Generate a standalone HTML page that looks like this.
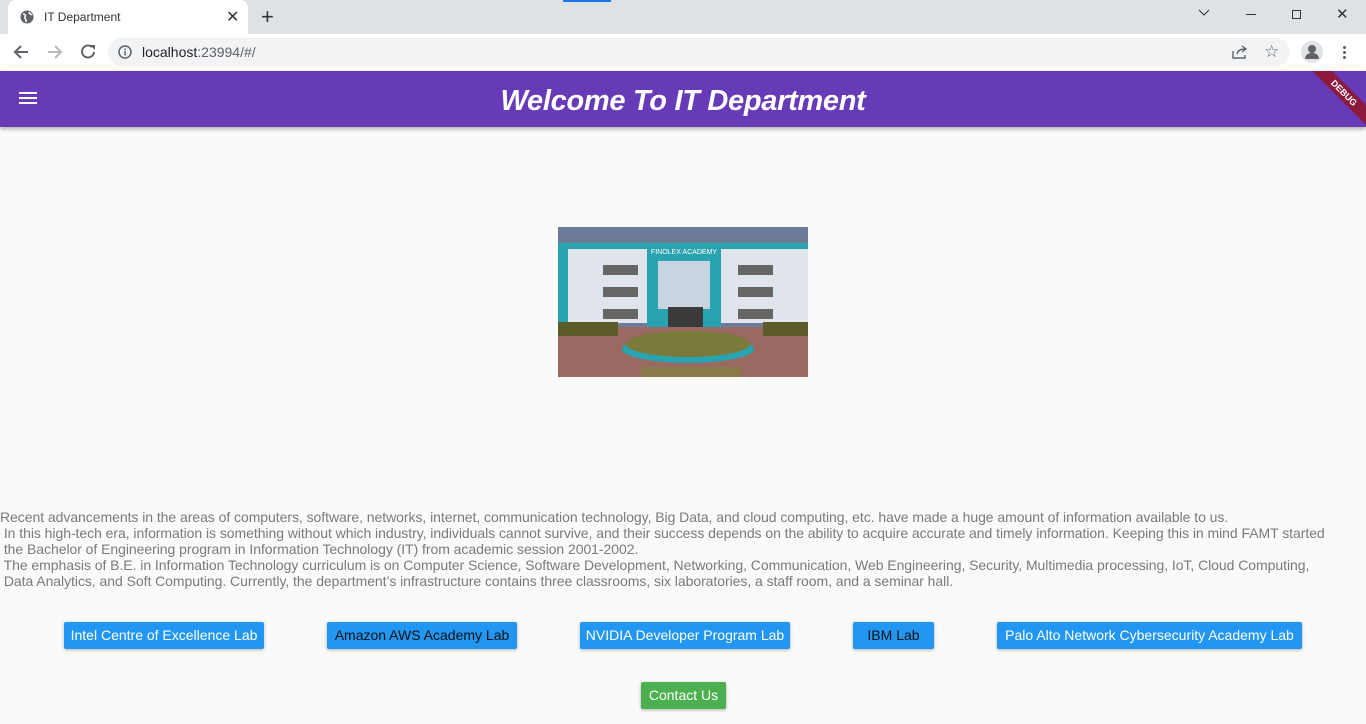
<!DOCTYPE html>
<html><head><meta charset="utf-8"><style>
*{margin:0;padding:0;box-sizing:border-box}
body{width:1366px;height:724px;overflow:hidden;background:#fafafa;font-family:"Liberation Sans",sans-serif;position:relative}
.abs{position:absolute}
.tabbar{left:0;top:0;width:1366px;height:34px;background:#dee1e6}
.tab{left:8px;top:0;width:240px;height:34px;background:#fff;border-radius:8px 8px 0 0;font-size:12px;color:#333}
.nav{left:0;top:34px;width:1366px;height:36px;background:#fff}
.url{left:108px;top:38px;width:1182px;height:28px;background:#f1f3f4;border-radius:14px;font-size:14px;color:#202124}
.appbar{left:0;top:71px;width:1366px;height:56px;background:#673ab7;box-shadow:0 2px 4px rgba(0,0,0,.3)}
.title{left:0;top:85px;width:1366px;text-align:center;color:#fff;font-size:29px;font-style:italic;font-weight:bold;letter-spacing:-0.3px}
.txt{left:0;top:509px;font-size:14px;line-height:16px;color:#7a7a7a;white-space:pre;letter-spacing:-0.05px}
.btn{height:27px;background:#2196f3;color:#fff;font-size:14px;line-height:27px;text-align:center;border-radius:2px;box-shadow:0 1px 3px rgba(0,0,0,.3)}
</style></head><body>
<div class="abs tabbar"></div>
<div class="abs" style="left:563px;top:0;width:48px;height:2px;background:#1a73e8"></div>
<div class="abs tab">
 <svg class="abs" style="left:12px;top:10px" width="14" height="14" viewBox="0 0 14 14"><circle cx="7" cy="7" r="6.5" fill="#5f6368"/><path d="M3 4c2 0 3 1 2 3s2 2 1 5M9 2c0 2 2 2 3 3" stroke="#fff" stroke-width="1.5" fill="none"/></svg>
 <span class="abs" style="left:36px;top:10px">IT Department</span>
 <span class="abs" style="left:218px;top:7px;font-size:16px;color:#333">✕</span>
</div>
<span class="abs" style="left:261px;top:4px;font-size:22px;color:#333">+</span>
<svg class="abs" style="left:1198px;top:9px" width="12" height="8"><path d="M1 1l5 5 5-5" stroke="#333" fill="none"/></svg>
<div class="abs" style="left:1246px;top:14px;width:10px;height:1px;background:#333"></div>
<div class="abs" style="left:1292px;top:10px;width:9px;height:9px;border:1px solid #333"></div>
<span class="abs" style="left:1336px;top:5px;font-size:15px;color:#333">✕</span>
<div class="abs nav"></div>
<svg class="abs" style="left:12px;top:43px" width="90" height="18" viewBox="0 0 90 18"><path d="M16 9H3M9 3L3 9l6 6" stroke="#5f6368" stroke-width="2" fill="none"/><path d="M36 9h13M43 3l6 6-6 6" stroke="#bbb" stroke-width="2" fill="none"/><path d="M80 4a6 6 0 1 0 2 5" stroke="#5f6368" stroke-width="2" fill="none"/><path d="M78 2h5v5z" fill="#5f6368"/></svg>
<div class="abs url"><svg class="abs" style="left:10px;top:7px" width="14" height="14"><circle cx="7" cy="7" r="6" stroke="#5f6368" stroke-width="1.5" fill="none"/><rect x="6.3" y="6" width="1.5" height="4.5" fill="#5f6368"/><rect x="6.3" y="3.5" width="1.5" height="1.5" fill="#5f6368"/></svg><span class="abs" style="left:34px;top:6px">localhost<span style="color:#5f6368">:23994/#/</span></span></div>
<svg class="abs" style="left:1231px;top:44px" width="18" height="16"><path d="M2 7v7h12v-3M6 10c1-4 4-5 8-5M11 2l4 3-4 3" stroke="#5f6368" stroke-width="1.4" fill="none"/></svg>
<span class="abs" style="left:1264px;top:42px;font-size:17px;color:#5f6368">☆</span>
<div class="abs" style="left:1301px;top:41px;width:22px;height:22px;border-radius:50%;background:#e1e3e6"><div class="abs" style="left:7px;top:4px;width:8px;height:8px;border-radius:50%;background:#5f6368"></div><div class="abs" style="left:4px;top:12px;width:14px;height:6px;border-radius:6px 6px 0 0;background:#5f6368"></div></div>
<div class="abs" style="left:1343px;top:45px;width:3px;height:14px;background:radial-gradient(circle,#5f6368 1.4px,transparent 1.6px) 0 0/3px 5px"></div>
<div class="abs appbar"></div>
<div class="abs" style="left:19px;top:92px;width:18px;height:2px;background:#fff;box-shadow:0 5px 0 #fff,0 10px 0 #fff"></div>
<div class="abs title">Welcome To IT Department</div>
<div class="abs" style="left:1302px;top:71px;width:64px;height:56px;overflow:hidden"><div class="abs" style="left:-8px;top:15px;width:100px;height:14px;background:#8b1a3c;transform:rotate(45deg);color:#fff;font-size:9px;font-weight:bold;text-align:center;line-height:14px">DEBUG</div></div>
<svg class="abs" style="left:558px;top:227px" width="250" height="150" viewBox="0 0 250 150">
<rect width="250" height="150" fill="#6b7b98"/>
<rect y="16" width="250" height="80" fill="#dfe5ea"/>
<rect y="16" width="250" height="6" fill="#2aa3b0"/>
<rect x="0" y="16" width="10" height="80" fill="#2aa3b0"/>
<rect x="89" y="16" width="74" height="95" fill="#2aa3b0"/>
<rect x="100" y="34" width="52" height="48" fill="#c8d4e0"/>
<rect x="110" y="80" width="35" height="28" fill="#3a3a3a"/>
<text x="126" y="27" fill="#fff" font-size="7" text-anchor="middle" font-family="Liberation Sans">FINOLEX ACADEMY</text>
<g fill="#666"><rect x="45" y="38" width="35" height="10"/><rect x="45" y="60" width="35" height="10"/><rect x="45" y="82" width="35" height="10"/><rect x="180" y="38" width="35" height="10"/><rect x="180" y="60" width="35" height="10"/><rect x="180" y="82" width="35" height="10"/></g>
<rect y="100" width="250" height="50" fill="#9a6a62"/>
<rect y="95" width="60" height="14" fill="#5a5a2a"/><rect x="205" y="95" width="45" height="14" fill="#5a5a2a"/>
<ellipse cx="130" cy="122" rx="66" ry="14" fill="#2aa3b0"/>
<ellipse cx="130" cy="117" rx="62" ry="13" fill="#7a7a3a"/>
<rect x="83" y="140" width="100" height="10" fill="#8a7a4a"/>
</svg>
<div class="abs txt">Recent advancements in the areas of computers, software, networks, internet, communication technology, Big Data, and cloud computing, etc. have made a huge amount of information available to us.
 In this high-tech era, information is something without which industry, individuals cannot survive, and their success depends on the ability to acquire accurate and timely information. Keeping this in mind FAMT started
 the Bachelor of Engineering program in Information Technology (IT) from academic session 2001-2002.
 The emphasis of B.E. in Information Technology curriculum is on Computer Science, Software Development, Networking, Communication, Web Engineering, Security, Multimedia processing, IoT, Cloud Computing,
 Data Analytics, and Soft Computing. Currently, the department’s infrastructure contains three classrooms, six laboratories, a staff room, and a seminar hall.</div>
<div class="abs btn" style="left:64px;top:622px;width:200px">Intel Centre of Excellence Lab</div>
<div class="abs btn" style="left:327px;top:622px;width:190px;color:#111">Amazon AWS Academy Lab</div>
<div class="abs btn" style="left:580px;top:622px;width:210px">NVIDIA Developer Program Lab</div>
<div class="abs btn" style="left:853px;top:622px;width:81px;color:#111">IBM Lab</div>
<div class="abs btn" style="left:997px;top:622px;width:305px">Palo Alto Network Cybersecurity Academy Lab</div>
<div class="abs btn" style="left:641px;top:682px;width:85px;background:#4caf50">Contact Us</div>
</body></html>
